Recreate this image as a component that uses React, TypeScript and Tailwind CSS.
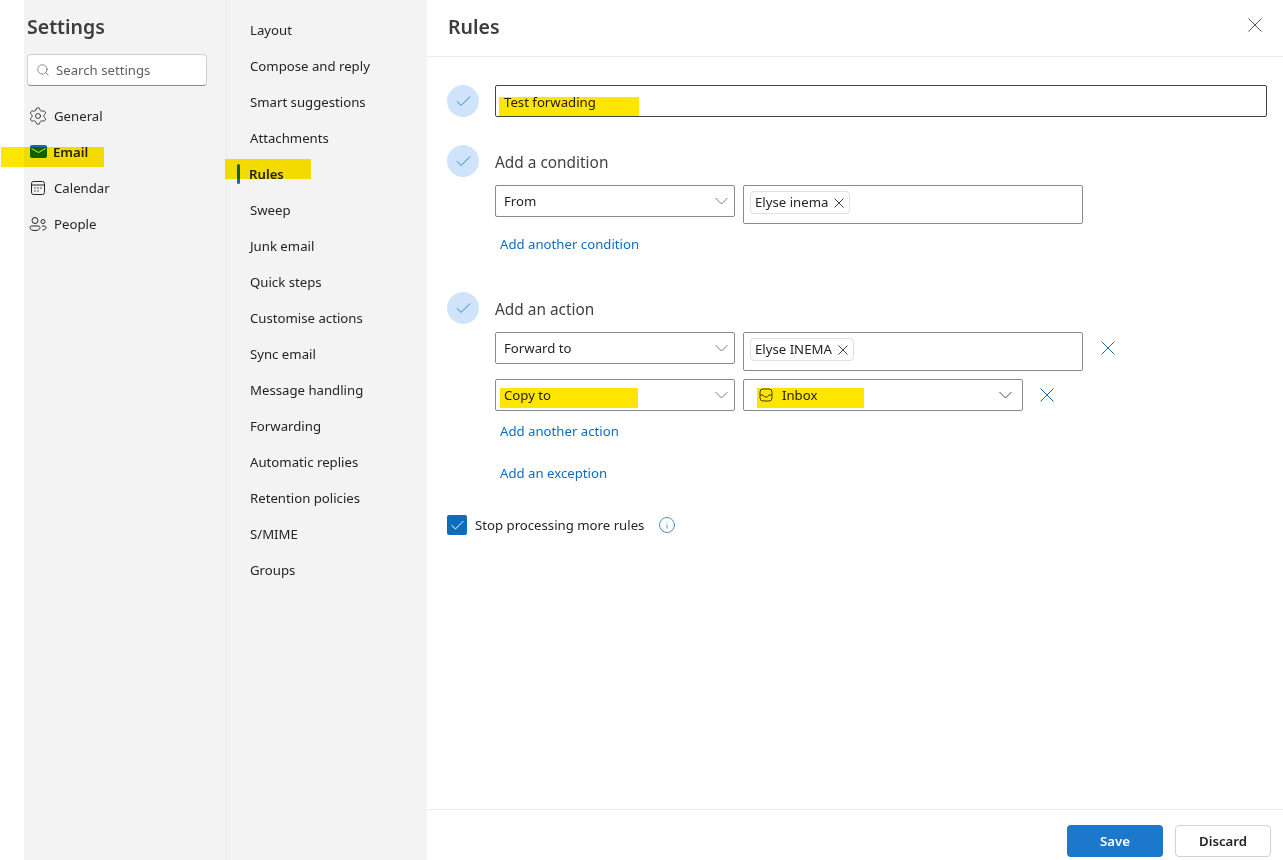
import React from 'react';
import { Check, Info, Search, Settings } from 'lucide-react';

const subItems = [
    'Layout',
    'Compose and reply',
    'Smart suggestions',
    'Attachments',
    'Rules',
    'Sweep',
    'Junk email',
    'Quick steps',
    'Customise actions',
    'Sync email',
    'Message handling',
    'Forwarding',
    'Automatic replies',
    'Retention policies',
    'S/MIME',
    'Groups',
];

function Marker({ className }: { className: string }) {
    return <span className={`absolute bg-[#ffe600] mix-blend-multiply ${className}`} />;
}

function Cross({ size, className }: { size: number; className: string }) {
    return (
        <svg width={size} height={size} viewBox={`0 0 ${size} ${size}`} className={`shrink-0 ${className}`}>
            <path d={`M.5 .5 ${size - 0.5} ${size - 0.5}M${size - 0.5} .5 .5 ${size - 0.5}`} fill="none" stroke="currentColor" />
        </svg>
    );
}

function Chevron({ className }: { className: string }) {
    return (
        <svg width="13" height="8" viewBox="0 0 13 8" className={`shrink-0 ${className}`}>
            <path d="M.5 1 6.500 7 12.500 1" fill="none" stroke="currentColor" />
        </svg>
    );
}

function StepCircle() {
    return (
        <span className="flex h-8 w-8 shrink-0 items-center justify-center rounded-full bg-[#cfe4fa]">
            <Check size={19} strokeWidth={1} className="text-[#0f6cbd]" />
        </span>
    );
}

function Dropdown({ label }: { label: string }) {
    return (
        <div className="flex h-8 w-60 items-center justify-between rounded-[2px] border border-[#8a8a8a] pl-2 pr-[6px]">
            <span className="pt-[2px]">{label}</span>
            <Chevron className="text-[#7a7a7a]" />
        </div>
    );
}

function Chip({ label }: { label: string }) {
    return (
        <div className="mt-[5px] ml-[6px] flex h-[23px] items-center gap-[6px] rounded-[4px] border border-[#e0e0e0] pl-[4px] pr-[5px]">
            <span>{label}</span>
            <Cross size={10} className="text-[#424242]" />
        </div>
    );
}

function LinkText({ children, className }: { children: string; className: string }) {
    return <div className={`pl-[5px] leading-5 text-[#0f6cbd] ${className}`}>{children}</div>;
}

function SideItem({ icon, label, active }: { icon: React.ReactNode; label: string; active?: boolean }) {
    return (
        <div className={`flex h-9 items-center pl-[1px] ${active ? 'font-semibold' : ''}`}>
            <span className="flex w-5 shrink-0 items-center justify-center">{icon}</span>
            <span className={active ? 'ml-[5px] pt-[2px]' : 'ml-[6px] pt-[2px]'}>{label}</span>
        </div>
    );
}

export default function App() {
    return (
        <div className="relative flex h-[860px] w-[1283px] overflow-hidden bg-white font-['Noto_Sans','Open_Sans',sans-serif] text-[13.2px] text-[#242424]">
            <div className="w-6 shrink-0" />

            <aside className="w-[203px] shrink-0 border-r border-[#ededed] bg-[#f3f3f3] pl-[3px]">
                <h1 className="mt-[13px] text-[19.5px] font-semibold leading-7 text-[#3d3d3d]">Settings</h1>
                <div className="mt-[13px] flex h-8 w-[180px] items-center rounded-[4px] border border-[#d1d1d1] border-b-[#8a8a8a] bg-white pl-[8px] text-[#616161]">
                    <Search size={14} strokeWidth={1.2} />
                    <span className="ml-[6px] pt-[2px]">Search settings</span>
                </div>
                <nav className="mt-3">
                    <SideItem icon={<Settings size={20} strokeWidth={1} />} label="General" />
                    <SideItem
                        active
                        label="Email"
                        icon={
                            <svg width="17" height="13" viewBox="0 0 17 13" className="-mt-[1px]">
                                <rect width="17" height="13" rx="2" fill="#0f6cbd" />
                                <path d="M1.500 3.500 8.500 7.500 15.500 3.500" fill="none" stroke="#fff" strokeWidth="1" />
                            </svg>
                        }
                    />
                    <SideItem
                        label="Calendar"
                        icon={
                            <svg width="16" height="16" viewBox="0 0 16 16" fill="none" stroke="#242424">
                                <rect x="1.500" y="1.500" width="13" height="13" rx="2" />
                                <path d="M1.500 5h13" />
                                <path d="M4.500 8h1M7.500 8h1M10.500 8h1M4.500 11h1M7.500 11h1" strokeWidth="1.400" />
                            </svg>
                        }
                    />
                    <SideItem
                        label="People"
                        icon={
                            <svg width="18" height="16" viewBox="0 0 18 16" fill="none" stroke="#242424">
                                <circle cx="6" cy="4.500" r="3" />
                                <circle cx="14" cy="5.500" r="2" />
                                <path d="M1 11.500c0-1 .7-1.500 1.500-1.500h7c.8 0 1.500.5 1.500 1.500 0 2-2 3-5 3s-5-1-5-3Z" />
                                <path d="M13.500 14c2 0 3.500-.8 3.500-2.500 0-1-.7-1.500-1.500-1.500h-2.500" />
                            </svg>
                        }
                    />
                </nav>
            </aside>

            <aside className="w-[200px] shrink-0 bg-[#f3f3f3] pt-3">
                {subItems.map((item) => (
                    <div
                        key={item}
                        className={`relative flex h-9 items-center pt-[2px] ${item === 'Rules' ? 'pl-[22px] font-semibold' : 'pl-[23px]'}`}
                    >
                        {item === 'Rules' && (
                            <span className="absolute left-[10px] top-[8px] h-5 w-[3px] rounded-sm bg-[#0f6cbd]" />
                        )}
                        {item}
                    </div>
                ))}
            </aside>

            <main className="flex min-w-0 flex-1 flex-col">
                <header className="flex h-[57px] shrink-0 items-center justify-between border-b border-[#ededed] pb-[3px] pl-[21px] pr-[21px]">
                    <h2 className="text-[19.5px] font-semibold text-[#3d3d3d]">Rules</h2>
                    <Cross size={14} className="-mt-[3px] text-[#555]" />
                </header>

                <div className="flex-1 pl-5 pt-7">
                    <div className="flex gap-4">
                        <StepCircle />
                        <div className="h-8 w-[772px] rounded-[2px] border border-[#444] pl-2 leading-[32px]">
                            Test forwading
                        </div>
                    </div>

                    <div className="mt-7 flex h-8 items-center gap-4">
                        <StepCircle />
                        <span className="pt-1 text-[15.4px] text-[#424242]">Add a condition</span>
                    </div>
                    <div className="ml-12 mt-2 flex gap-2">
                        <Dropdown label="From" />
                        <div className="h-[39px] w-[340px] rounded-[2px] border border-[#8a8a8a]">
                            <div className="flex">
                                <Chip label="Elyse inema" />
                            </div>
                        </div>
                    </div>
                    <LinkText className="ml-12 mt-[10px]">Add another condition</LinkText>

                    <div className="mt-[38px] flex h-8 items-center gap-4">
                        <StepCircle />
                        <span className="pt-1 text-[15.4px] text-[#424242]">Add an action</span>
                    </div>
                    <div className="ml-12 mt-2 flex gap-2">
                        <Dropdown label="Forward to" />
                        <div className="h-[39px] w-[340px] rounded-[2px] border border-[#8a8a8a]">
                            <div className="flex">
                                <Chip label="Elyse INEMA" />
                            </div>
                        </div>
                        <Cross size={14} className="ml-[10px] mt-[9px] text-[#0f6cbd]" />
                    </div>
                    <div className="ml-12 mt-2 flex gap-2">
                        <Dropdown label="Copy to" />
                        <div className="flex h-8 w-[280px] items-center justify-between rounded-[2px] border border-[#8a8a8a] pl-[15px] pr-[10px]">
                            <span className="flex items-center gap-[9px]">
                                <svg width="14" height="14" viewBox="0 0 14 14" fill="none" stroke="#424242">
                                    <rect x="1" y="1" width="12" height="12" rx="3" />
                                    <path d="M1 7h3c.5 1.500 1.500 2 3 2s2.500-.5 3-2h3" />
                                </svg>
                                <span className="pt-[2px]">Inbox</span>
                            </span>
                            <Chevron className="text-[#444]" />
                        </div>
                        <Cross size={14} className="ml-[9px] mt-[9px] text-[#0f6cbd]" />
                    </div>
                    <LinkText className="ml-12 mt-[10px]">Add another action</LinkText>
                    <LinkText className="ml-12 mt-[22px]">Add an exception</LinkText>

                    <div className="mt-[32px] flex h-5 items-center">
                        <span className="flex h-5 w-5 items-center justify-center rounded-[2px] bg-[#0f6cbd]">
                            <Check size={17} strokeWidth={1.4} className="text-white" />
                        </span>
                        <span className="ml-2 pt-[2px]">Stop processing more rules</span>
                        <Info size={18} strokeWidth={1} className="ml-[14px] text-[#0f6cbd]" />
                    </div>
                </div>

                <footer className="flex h-[51px] shrink-0 justify-end gap-3 border-t border-[#ededed] pr-3 pt-[15px] font-semibold">
                    <button className="h-8 w-24 rounded-[4px] bg-[#1c78cb] pt-[1px] text-white">Save</button>
                    <button className="h-8 w-24 rounded-[4px] border border-[#d1d1d1] bg-white pt-[1px]">Discard</button>
                </footer>
            </main>

            <Marker className="left-[1px] top-[147px] h-5 w-[103px]" />
            <Marker className="left-[225px] top-[159px] h-5 w-[86px]" />
            <Marker className="left-[499px] top-[97px] h-[19px] w-[140px]" />
            <Marker className="left-[500px] top-[388px] h-5 w-[138px]" />
            <Marker className="left-[757px] top-[388px] h-5 w-[107px]" />
        </div>
    );
}
